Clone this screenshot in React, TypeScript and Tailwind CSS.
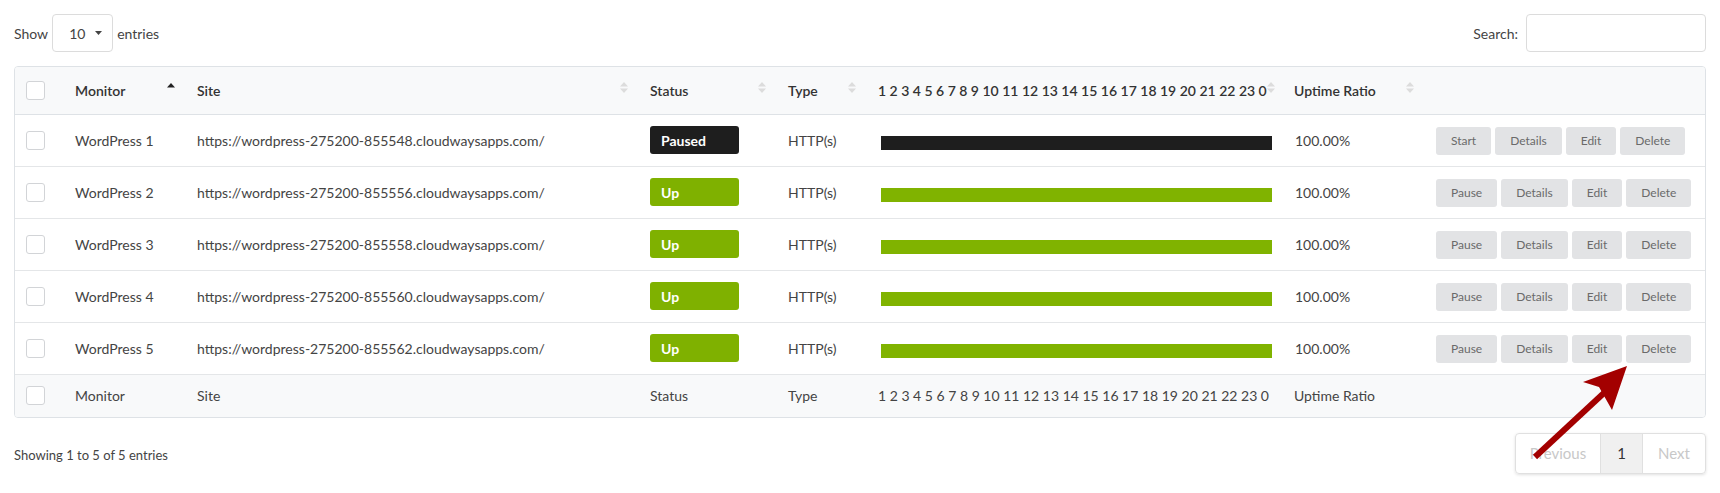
import React from "react"

const HOURS = "1 2 3 4 5 6 7 8 9 10 11 12 13 14 15 16 17 18 19 20 21 22 23 0"

const rows = [
  { name: "WordPress 1", site: "https://wordpress-275200-855548.cloudwaysapps.com/", up: false },
  { name: "WordPress 2", site: "https://wordpress-275200-855556.cloudwaysapps.com/", up: true },
  { name: "WordPress 3", site: "https://wordpress-275200-855558.cloudwaysapps.com/", up: true },
  { name: "WordPress 4", site: "https://wordpress-275200-855560.cloudwaysapps.com/", up: true },
  { name: "WordPress 5", site: "https://wordpress-275200-855562.cloudwaysapps.com/", up: true },
]

function Checkbox() {
  return <div className="w-[19px] h-[19px] rounded-[3px] border border-[#d2d4d7] bg-white" />
}

function SortBoth() {
  return (
    <svg width="8" height="11" viewBox="0 0 8 11" className="shrink-0">
      <path d="M4 0 L8 4.5 H0 Z" fill="#dcdcdc" />
      <path d="M4 11 L8 6.5 H0 Z" fill="#dcdcdc" />
    </svg>
  )
}

function SortUp() {
  return (
    <svg width="8" height="11" viewBox="0 0 8 11" className="shrink-0">
      <path d="M4 1 L8 5.5 H0 Z" fill="#222" />
    </svg>
  )
}

function HeadCell({ label, sort }: { label: string; sort: "up" | "both" }) {
  return (
    <th className="pl-3 pr-[10px] font-semibold text-left align-middle">
      <div className="flex items-center justify-between">
        <span className="whitespace-nowrap">{label}</span>
        <span className="-mt-[5px]">{sort === "up" ? <SortUp /> : <SortBoth />}</span>
      </div>
    </th>
  )
}

function Btn({ children }: { children: React.ReactNode }) {
  return (
    <button className="h-[28px] px-[15px] rounded-[3px] bg-[#e2e3e5] text-[12px] text-[#6a6a6a]">
      {children}
    </button>
  )
}

export default function App() {
  return (
    <div className="relative w-[1720px] h-[493px] bg-white text-[14px] text-[#444] font-['Lato','Liberation_Sans',sans-serif]">
      <div className="px-[14px] pt-[14px]">
        <div className="flex items-center justify-between h-[38px]">
          <div className="flex items-center gap-[4px]">
            <span>Show</span>
            <div className="w-[61px] h-[38px] border border-[#dcdcdc] rounded-[4px] flex items-center pl-[16px] gap-[10px]">
              <span>10</span>
              <svg width="7" height="4" viewBox="0 0 7 4">
                <path d="M0 0 H7 L3.5 4 Z" fill="#444" />
              </svg>
            </div>
            <span>entries</span>
          </div>
          <div className="flex items-center gap-[8px]">
            <span>Search:</span>
            <div className="w-[180px] h-[38px] border border-[#dcdcdc] rounded-[4px] bg-white" />
          </div>
        </div>

        <div className="mt-[14px] border border-[#dee2e6] rounded-[4px] overflow-hidden">
          <table className="table-fixed w-[1690px] border-collapse">
            <colgroup>
              <col className="w-[48px]" />
              <col className="w-[122px]" />
              <col className="w-[453px]" />
              <col className="w-[138px]" />
              <col className="w-[90px]" />
              <col className="w-[416px]" />
              <col className="w-[142px]" />
              <col className="w-[281px]" />
            </colgroup>
            <thead>
              <tr className="h-[47px] bg-[#f8f9fa] text-[#333] border-b border-[#dee2e6]">
                <th className="pl-[11px] align-middle">
                  <Checkbox />
                </th>
                <HeadCell label="Monitor" sort="up" />
                <HeadCell label="Site" sort="both" />
                <HeadCell label="Status" sort="both" />
                <HeadCell label="Type" sort="both" />
                <HeadCell label={HOURS} sort="both" />
                <HeadCell label="Uptime Ratio" sort="both" />
                <th />
              </tr>
            </thead>
            <tbody>
              {rows.map((r) => (
                <tr key={r.name} className="h-[52px] border-b border-[#e4e6e8]">
                  <td className="pl-[11px]">
                    <Checkbox />
                  </td>
                  <td className="pl-3 whitespace-nowrap">{r.name}</td>
                  <td className="pl-3 whitespace-nowrap">{r.site}</td>
                  <td className="pl-3">
                    <div
                      className={
                        "w-[89px] h-[28px] rounded-[3px] flex items-center pl-[11px] text-white font-bold " +
                        (r.up ? "bg-[#7fb100]" : "bg-[#1e1e1e]")
                      }
                    >
                      {r.up ? "Up" : "Paused"}
                    </div>
                  </td>
                  <td className="pl-3 whitespace-nowrap">HTTP(s)</td>
                  <td className="pl-[15px] pr-[10px]">
                    <div className={"h-[14px] mt-[6px] " + (r.up ? "bg-[#80b300]" : "bg-[#1e1e1e]")} />
                  </td>
                  <td className="pl-[13px]">100.00%</td>
                  <td className="pl-3">
                    <div className="flex gap-[4px] pt-[1px]">
                      <Btn>{r.up ? "Pause" : "Start"}</Btn>
                      <Btn>Details</Btn>
                      <Btn>Edit</Btn>
                      <Btn>Delete</Btn>
                    </div>
                  </td>
                </tr>
              ))}
            </tbody>
            <tfoot>
              <tr className="h-[43px] bg-[#f8f9fa] text-[#444]">
                <td className="pl-[11px]">
                  <Checkbox />
                </td>
                <td className="pl-3">Monitor</td>
                <td className="pl-3">Site</td>
                <td className="pl-3">Status</td>
                <td className="pl-3">Type</td>
                <td className="pl-3 whitespace-nowrap">{HOURS}</td>
                <td className="pl-3">Uptime Ratio</td>
                <td />
              </tr>
            </tfoot>
          </table>
        </div>

        <div className="flex items-start justify-between mt-[15px]">
          <div className="text-[13px] pt-[13px]">Showing 1 to 5 of 5 entries</div>
          <div className="flex h-[41px] border border-[#e0e0e0] rounded-[4px] shadow-[0_1px_3px_rgba(0,0,0,0.12)] text-[15px] overflow-hidden">
            <div className="w-[84px] flex items-center justify-center text-[#c8c8c8]">Previous</div>
            <div className="w-[43px] flex items-center justify-center bg-[#f0f0f0] border-x border-[#e0e0e0] text-[#333]">
              1
            </div>
            <div className="w-[62px] flex items-center justify-center text-[#c8c8c8]">Next</div>
          </div>
        </div>
      </div>

      <svg className="absolute left-0 top-0 pointer-events-none" width="1720" height="493" viewBox="0 0 1720 493">
        <line x1="1535" y1="457" x2="1605" y2="392" stroke="#a30000" strokeWidth="6" />
        <path d="M1627 366 L1583 382 L1599 387 L1612 410 Z" fill="#a30000" />
      </svg>
    </div>
  )
}
